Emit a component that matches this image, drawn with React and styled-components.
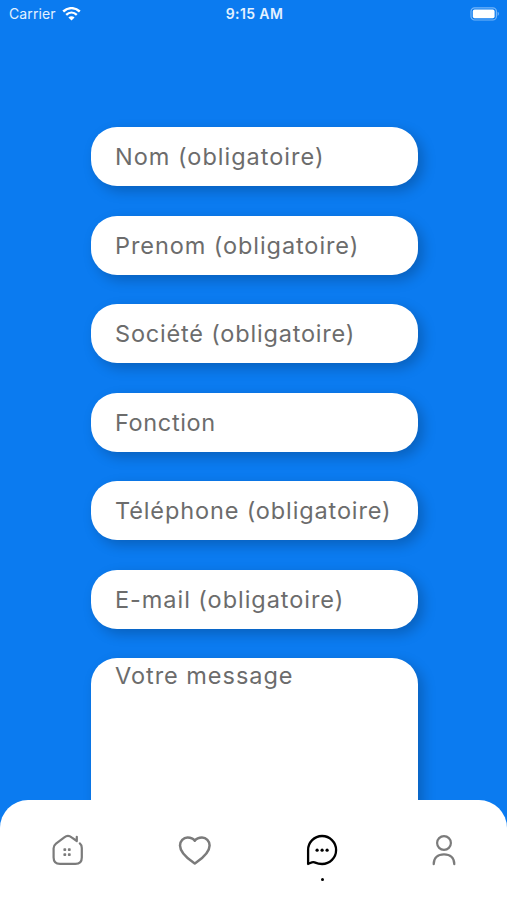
import React from 'react';
import styled, { createGlobalStyle } from 'styled-components';

const GlobalStyle = createGlobalStyle`
    * {
        box-sizing: border-box;
    }

    body {
        margin: 0;
        background: #0b7bf0;
        font-family: Inter, "Liberation Sans", sans-serif;
    }
`;

const Screen = styled.div`
    display: flex;
    flex-direction: column;
    width: 507px;
    height: 900px;
    overflow: hidden;
    background: #0b7bf0;
`;

const StatusBar = styled.header`
    display: grid;
    grid-template-columns: 1fr auto 1fr;
    align-items: center;
    flex: none;
    height: 27px;
    padding: 0 7px 0 9px;
    color: #e3f1ff;
    font-size: 14px;
`;

const Carrier = styled.div`
    display: flex;
    align-items: center;
    gap: 6px;
    letter-spacing: 0.1px;
`;

const Clock = styled.div`
    font-weight: 600;
    letter-spacing: 0.4px;
`;

const Battery = styled.div`
    display: flex;
    justify-content: flex-end;
`;

const Form = styled.form`
    display: flex;
    flex-direction: column;
    flex: 1;
    gap: 29.5px;
    min-height: 0;
    padding: 100px 89.5px 0 90.5px;
    overflow: hidden;
`;

const Field = styled.input`
    flex: none;
    width: 100%;
    height: 59px;
    padding: 0 0 0 24.5px;
    border: 0;
    border-radius: 26px;
    outline: 0;
    background: #fff;
    box-shadow: 5px 5px 13px rgba(0, 0, 0, 0.22);
    color: #222;
    font-family: inherit;
    font-size: 23.5px;
    font-weight: 400;
    letter-spacing: ${({ $spacing }) => $spacing || 0}px;

    &::placeholder {
        color: #6c6c6c;
        opacity: 1;
    }
`;

const Message = styled(Field)`
    height: 240px;
    padding-top: 4px;
    line-height: 28px;
    resize: none;
`;

const TabBar = styled.nav`
    display: grid;
    grid-template-columns: 127px 127px 122px 40px;
    align-items: start;
    flex: none;
    height: 100px;
    padding: 32px 0 0 48px;
    border-radius: 28px 28px 0 0;
    background: #fff;
`;

const Tab = styled.button`
    display: flex;
    flex-direction: column;
    align-items: center;
    gap: 10px;
    width: 40px;
    padding: 0;
    border: 0;
    background: none;
    color: ${({ $active }) => ($active ? '#000' : '#7b7b7b')};
`;

const ActiveDot = styled.span`
    width: 3px;
    height: 3px;
    border-radius: 50%;
    background: #000;
`;

const TabIcon = styled.svg`
    display: block;
    flex: none;
    width: 36px;
    height: 36px;
    fill: none;
    stroke: currentColor;
    stroke-width: ${({ $stroke }) => $stroke || 2.2};
    stroke-linecap: round;
    stroke-linejoin: round;
`;

const WifiIcon = () => (
    <svg width="19" height="14" viewBox="0 0 19 14" fill="none" stroke="#fff" strokeWidth="2.4">
        <path d="M1.2 4.5C6 0 13 0 17.8 4.5" />
        <path d="M4.2 7.8c3.1-2.9 7.5-2.9 10.6 0" />
        <path d="M9.5 13.5 6.4 10.4c1.8-1.6 4.4-1.6 6.2 0z" fill="#fff" stroke="none" />
    </svg>
);

const BatteryIcon = () => (
    <svg width="30" height="14" viewBox="0 0 30 14">
        <rect x="1" y="0.8" width="25.4" height="12.2" rx="3.6" fill="none" stroke="#75b5f8" strokeWidth="1.2" />
        <rect x="2.8" y="2.6" width="21.8" height="8.6" rx="1.8" fill="#fff" />
        <path d="M27.6 4.8c1.8.7 1.8 3.5 0 4.2z" fill="#75b5f8" />
    </svg>
);

const HomeIcon = () => (
    <TabIcon viewBox="0 0 36 36">
        <path d="M26.8 9V4.8M26.8 9 21.6 5.3Q18 2.6 14.3 5.3L6 11.6Q3.6 13.5 3.6 16.3V25.4Q3.6 31.8 10 31.8H25.4Q31.8 31.8 31.8 25.4V16Q31.8 13 29.8 11.4" />
        <g fill="currentColor" stroke="none">
            <rect x="13.4" y="16.3" width="2.8" height="2.8" rx=".8" />
            <rect x="17.9" y="16.3" width="2.8" height="2.8" rx=".8" />
            <rect x="13.4" y="21.2" width="2.8" height="2.8" rx=".8" />
            <rect x="17.9" y="21.2" width="2.8" height="2.8" rx=".8" />
        </g>
    </TabIcon>
);

const HeartIcon = () => (
    <TabIcon viewBox="0 0 36 36" $stroke={2.5}>
        <path d="M17.8 31.5C14.3 29 3 22 3 13.4C3 8.9 6.4 5.5 10.6 5.5C13.7 5.5 16.4 6.8 17.8 8.7C19.2 6.8 21.9 5.5 25 5.5C29.2 5.5 32.6 8.9 32.6 13.4C32.6 22 21.3 29 17.8 31.5Z" />
    </TabIcon>
);

const ChatIcon = () => (
    <TabIcon viewBox="0 0 36 36" $stroke={2.3}>
        <path d="M4.1 32V18.1A14 14 0 1 1 18.1 32C15 32 12.5 31.2 10.5 30.4C8.1 29.4 6.6 31.2 4.1 32Z" />
        <g fill="currentColor" stroke="none">
            <circle cx="13.1" cy="18.2" r="1.6" />
            <circle cx="18.1" cy="18.2" r="1.6" />
            <circle cx="23.1" cy="18.2" r="1.6" />
        </g>
    </TabIcon>
);

const UserIcon = () => (
    <TabIcon viewBox="0 0 36 36">
        <circle cx="18" cy="11" r="6.9" />
        <path d="M7.7 32.2C7.7 25.8 11.8 22.4 18 22.4S28.3 25.8 28.3 32.2" />
    </TabIcon>
);

const fields = [
    { label: 'Nom (obligatoire)', spacing: 1 },
    { label: 'Prenom (obligatoire)', spacing: 0.92 },
    { label: 'Société (obligatoire)', spacing: 0.81 },
    { label: 'Fonction', spacing: 0.65 },
    { label: 'Téléphone (obligatoire)', spacing: 0.87 },
    { label: 'E-mail (obligatoire)', spacing: 0.95 },
];

const tabs = [
    { name: 'Accueil', Icon: HomeIcon },
    { name: 'Favoris', Icon: HeartIcon },
    { name: 'Contact', Icon: ChatIcon, active: true },
    { name: 'Profil', Icon: UserIcon },
];

const App = () => (
    <>
        <GlobalStyle />
        <Screen>
            <StatusBar>
                <Carrier>
                    Carrier
                    <WifiIcon />
                </Carrier>
                <Clock>9:15 AM</Clock>
                <Battery>
                    <BatteryIcon />
                </Battery>
            </StatusBar>

            <Form>
                {fields.map(({ label, spacing }) => (
                    <Field key={label} placeholder={label} $spacing={spacing} />
                ))}
                <Message as="textarea" placeholder="Votre message" $spacing={0.96} />
            </Form>

            <TabBar>
                {tabs.map(({ name, Icon, active }) => (
                    <Tab key={name} type="button" $active={active}>
                        <Icon />
                        {active && <ActiveDot />}
                    </Tab>
                ))}
            </TabBar>
        </Screen>
    </>
);

export default App;
